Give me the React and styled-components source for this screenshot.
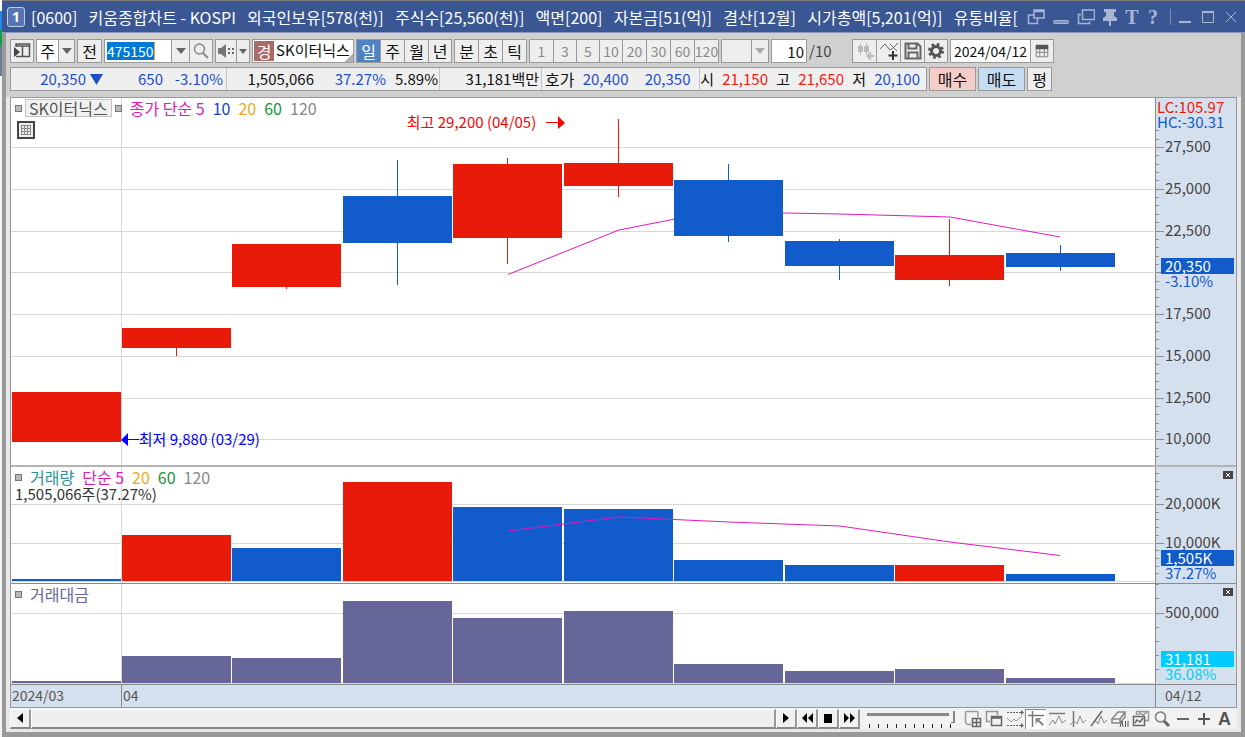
import React from 'react'
import styled, { createGlobalStyle } from 'styled-components'

const GlobalStyle = createGlobalStyle`
  * {
    box-sizing: border-box;
  }
  body {
    margin: 0;
    background: #ffffff;
    font: 16px/20px 'Noto Sans CJK KR', sans-serif;
    color: #111111;
  }
  button, input, select {
    font: inherit;
    color: inherit;
    margin: 0;
    padding: 0;
    border: 0;
    border-radius: 0;
    background: none;
    appearance: none;
    outline: none;
  }
`

const RED = '#e81b0a'
const BLUE = '#125bca'
const PURPLE = '#666699'
const PINK = '#e01ab8'

const Screen = styled.div`
  display: flex;
  min-height: 100vh;
`

const Behind = styled.div`
  width: 2px;
  background: linear-gradient(#ffffff 11px, #1e88e5 11px 29px, #12a04a 29px 46px, #6a7c96 46px 76px, #f4f4f4 76px);
`

const Win = styled.main`
  flex: 1;
  min-width: 0;
  display: flex;
  flex-direction: column;
  background: #999999;
  border-top: 1px solid #7c7c7c;
  padding-bottom: 5px;
`

const TitleBar = styled.header`
  height: 32px;
  display: flex;
  align-items: center;
  background: #3a5794;
  border-bottom: 1px solid #8a99bd;
  padding: 0 5px;
  color: #ffffff;
`

const WinNumber = styled.span`
  width: 18px;
  height: 20px;
  border: 1px solid #c3cde4;
  border-radius: 3px;
  background: #5674b4;
  font: bold 14px/18px 'Open Sans', sans-serif;
  text-align: center;
`

const Title = styled.h1`
  flex: 1;
  display: flex;
  justify-content: space-between;
  margin: 0 8px 0 6px;
  font-size: 16px;
  font-weight: 400;
  white-space: nowrap;
`

const TitleIcons = styled.div`
  display: flex;
  align-items: center;
  gap: 5px;
  color: #a9b6d3;
`

const TitleButton = styled.button`
  width: ${props => props.$width || 18}px;
  height: 20px;
  display: flex;
  align-items: center;
  justify-content: center;
  font: bold 20px/20px 'Liberation Serif', serif;
`

const TitleSplit = styled.span`
  width: 1px;
  height: 16px;
  margin-left: 4px;
  background: #7d8db0;
`

const Body = styled.div`
  flex: 1;
  margin: 0 4px;
  display: flex;
  flex-direction: column;
  background: #e8e8e8;
`

const Tools = styled.div`
  display: flex;
  flex-direction: column;
  gap: 4px;
  padding: 6px 4px;
  background: #d0d0d0;
`

const ToolRow = styled.div`
  display: flex;
  height: 24px;
  gap: 2px;
  white-space: nowrap;
`

const Group = styled.div`
  display: flex;
  background: #ffffff;
  border: 1px solid #999999;
  width: ${props => (props.$width ? `${props.$width}px` : 'auto')};

  > * + * {
    border-left: 1px solid #999999;
  }
`

const Tool = styled.button`
  width: ${props => props.$width || 24}px;
  height: 22px;
  display: flex;
  align-items: center;
  justify-content: center;
  background: ${props => (props.$on ? '#4f83c4' : '#eeeeee')};
  color: ${props => (props.$on ? '#ffffff' : props.$dim ? '#8a8a8a' : '#111111')};
  font-size: ${props => (props.$small ? 14 : 16)}px;
`

const Period = styled.select`
  width: 21px;
  text-align: center;
  text-align-last: center;
`

const CodeBox = styled.label`
  width: 66px;
  padding: 2px;
  display: flex;
`

const CodeInput = styled.input`
  width: 48px;
  height: 18px;
  background: #0078d7;
  color: #ffffff;
  border-right: 1px solid #f0a030;
  font-size: 14px;
`

const StockMark = styled.span`
  width: 20px;
  margin: 1px;
  text-align: center;
  background: #ab6a6a;
  color: #ffffff;
`

const StockName = styled.span`
  && {
    border: 0;
  }
  flex: 1;
  padding-left: 1px;
  font-size: 15px;
  background: linear-gradient(135deg, transparent 50%, #b0b0b0 50%) right bottom / 8px 8px no-repeat;
`

const CountInput = styled.input`
  width: 36px;
  height: 24px;
  border: 1px solid #999999;
  background: #ffffff;
  text-align: right;
  padding-right: 2px;
  font-size: 15px;
`

const CountTotal = styled.span`
  width: 41px;
  font-size: 15px;
  line-height: 24px;
  color: #444444;
`

const DateInput = styled.input`
  width: 79px;
  padding-left: 3px;
  font-size: 14px;
`

const InfoBox = styled.div`
  display: flex;
  background: #efefef;
  border: 1px solid #999999;
`

const InfoCell = styled.div`
  display: flex;
  width: ${props => props.$width}px;
  line-height: 22px;

  & + & {
    border-left: 1px solid #c4c4c4;
  }
`

const Value = styled.span`
  width: ${props => props.$width}px;
  text-align: right;
  font-size: 15px;
  color: ${props => props.$color || '#111111'};
`

const Label = styled.span`
  padding-left: 3px;
`

const Order = styled.button`
  width: ${props => props.$width}px;
  height: 24px;
  border: 1px solid #999999;
  background: ${props => props.$bg};
`

const ChartBox = styled.section`
  margin: 0 4px;
  border: 1px solid #999999;
  background: #ffffff;
`

const Pane = styled.div`
  display: flex;
  height: ${props => props.$height}px;
  border-bottom: ${props => props.$line}px solid ${props => (props.$line > 1 ? '#b4b4b4' : '#8c8c8c')};
`

const Plot = styled.div`
  position: relative;
  flex: 1;
  min-width: 0;

  > svg {
    display: block;
    width: 100%;
    height: 100%;
  }
`

const AxisSvg = styled.svg`
  display: block;
  width: 81px;
  height: 100%;
  flex: none;
  overflow: visible;
  background: #d5e0ee;
  border-left: 1px solid #8c8c8c;
  fill: #444444;
  font-size: 15px;
`

const Legend = styled.div`
  position: absolute;
  top: ${props => props.$top || 0}px;
  left: 4px;
  display: flex;
  align-items: center;
  gap: 8px;
  white-space: nowrap;
`

const NameBox = styled.div`
  display: flex;
  align-items: center;
  gap: 3px;
`

const Dot = styled.i`
  width: 7px;
  height: 7px;
  border: 1px solid #777777;
  background: #b8b8b8;
`

const Key = styled.span`
  color: ${props => props.$color};
`

const Volume = styled.span`
  color: #333333;
  font-size: 15px;
`

const NameTag = styled.span`
  height: 18px;
  line-height: 16px;
  padding: 0 3px;
  border: 1px solid #c4c4c4;
  background: #f1f1f1;
  color: #555555;
`

const TableButton = styled.button`
  position: absolute;
  left: 6px;
  top: 23px;
  width: 18px;
  height: 18px;
`

const Mark = styled.span`
  position: absolute;
  left: ${props => props.$left}%;
  top: ${props => props.$top}px;
  display: flex;
  align-items: center;
  gap: ${props => props.$gap}px;
  color: ${props => props.$color};
  font-size: 15px;
  white-space: nowrap;
`

const Dates = styled.div`
  display: flex;
  height: 22px;
  background: #d5e0ee;
  color: #555555;
  font-size: 14px;
  line-height: 20px;
`

const DateCell = styled.div`
  ${props => (props.$width ? `width: ${props.$width};` : 'flex: 1;')}
  padding-left: ${props => props.$pad || 1}px;

  & + & {
    border-left: 1px solid #8c8c8c;
  }
`

const Bottom = styled.footer`
  display: flex;
  align-items: center;
  height: 21px;
  margin: 0 4px;
  padding-right: 2px;
  background: #f2f2f2;
`

const ScrollButton = styled.button`
  width: 21px;
  height: 20px;
  display: flex;
  align-items: center;
  justify-content: center;
  background: #f0f0f0;
  border: solid;
  border-width: 1px 2px 2px 1px;
  border-color: #ffffff #999999 #888888 #ffffff;
`

const Thumb = styled.div`
  flex: 1;
  height: 20px;
  background: #efefef;
  border: solid;
  border-width: 1px 2px 2px 1px;
  border-color: #ffffff #999999 #888888 #ffffff;
`

const SpeedBox = styled.label`
  width: 88px;
  margin: 0 7px;
  display: flex;
  flex-direction: column;
`

const Speed = styled.input`
  width: 100%;
  height: 14px;
  background: linear-gradient(#888888, #888888) 0 3px / 82px 3px no-repeat;

  &::-webkit-slider-thumb {
    appearance: none;
    width: 4px;
    height: 12px;
    background: #f2f2f2;
    border-right: 2px solid #888888;
    border-bottom: 1px solid #777777;
  }
`

const ChartTools = styled.div`
  display: flex;
`

const ChartTool = styled.button`
  width: 21px;
  height: 20px;
  display: flex;
  align-items: center;
  justify-content: center;
  color: #555555;
  font: bold 18px/20px 'Liberation Sans', sans-serif;
  ${props => props.$on && 'background: #ffffff; border: solid #888888; border-width: 1px 0 0 1px;'}
`

const COLUMN = 110.45
const BAR = 109

const days = [
  { open: 9880, close: 12850, high: 12850, low: 9880, volume: 520, up: false, amount: 14 },
  { open: 15500, close: 16670, high: 16670, low: 15000, volume: 11950, up: true, amount: 195 },
  { open: 19150, close: 21700, high: 21700, low: 19000, volume: 8700, up: false, amount: 177 },
  { open: 24540, close: 21730, high: 26720, low: 19240, volume: 25600, up: true, amount: 585 },
  { open: 22030, close: 26480, high: 26840, low: 20500, volume: 19100, up: false, amount: 461 },
  { open: 25170, close: 26540, high: 29200, low: 24500, volume: 18700, up: false, amount: 514 },
  { open: 25500, close: 22180, high: 26480, low: 21800, volume: 5450, up: false, amount: 135 },
  { open: 21850, close: 20380, high: 22000, low: 19540, volume: 4150, up: false, amount: 85 },
  { open: 19540, close: 21040, high: 23200, low: 19180, volume: 4030, up: true, amount: 96 },
  { open: 21150, close: 20350, high: 21650, low: 20100, volume: 1800, up: false, amount: 35 }
]

const priceY = price => Math.round(49 + (27500 - price) * 0.016714)
const volumeY = volume => Math.round(114 - volume * 0.00385)
const amountY = amount => Math.round(99 - amount * 0.141)
const barX = index => Math.floor(1 + index * COLUMN)

const range = (from, to, step) => {
  const list = []
  for (let value = from; value <= to; value += step) list.push(value)
  return list
}

function Grid({ lines, height }) {
  return (
    <g stroke="#d8d8d8">
      {lines.map(y => (
        <line key={y} x1="0" x2="1143" y1={y + 0.5} y2={y + 0.5} />
      ))}
      <line x1="110.5" x2="110.5" y1="0" y2={height} />
    </g>
  )
}

function PlotSvg({ height, label, children }) {
  return (
    <svg viewBox={`0 0 1144 ${height}`} preserveAspectRatio="none" role="img" aria-label={label} shapeRendering="crispEdges">
      {children}
    </svg>
  )
}

function Axis({ majors, minors, children }) {
  return (
    <AxisSvg>
      <g stroke="#8c8c8c" shapeRendering="crispEdges">
        {minors.map(y => (
          <line key={y} x1="0" x2="3" y1={y + 0.5} y2={y + 0.5} />
        ))}
        {majors.map(({ y }) => (
          <line key={y} x1="0" x2="8" y1={y + 0.5} y2={y + 0.5} />
        ))}
      </g>
      {majors.map(({ y, text }) => (
        <text key={y} x="9" y={y + 5}>
          {text}
        </text>
      ))}
      {children}
    </AxisSvg>
  )
}

function Current({ y, color, value, rate }) {
  return (
    <g>
      <rect x="5" y={y} width="73" height="16" fill={color} />
      <text x="9" y={y + 14} fill="#ffffff">
        {value}
      </text>
      <text x="9" y={y + 29} fill={color}>
        {rate}
      </text>
    </g>
  )
}

function CloseMark() {
  return (
    <g>
      <rect x="67" y="4" width="10" height="8" fill="#444444" />
      <path d="M70 6l4 4M74 6l-4 4" stroke="#ffffff" />
    </g>
  )
}

function PricePane() {
  const majors = range(10000, 27500, 2500).map(price => ({
    y: priceY(price),
    text: price === 20000 ? '' : price.toLocaleString('en-US')
  }))
  return (
    <Pane $height={369} $line={2}>
      <Plot>
        <PlotSvg height={367} label="가격 차트">
          <Grid lines={majors.map(major => major.y)} height={367} />
          <polyline
            points="497,176.5 608,132 664,121 718,114 774,115 829,116 939,119 1049,139"
            fill="none"
            stroke={PINK}
            shapeRendering="auto"
          />
          {days.map((day, index) => {
            const top = priceY(Math.max(day.open, day.close))
            const bottom = priceY(Math.min(day.open, day.close))
            const color = day.close > day.open ? RED : BLUE
            const x = barX(index)
            return (
              <g key={index} fill={color}>
                <rect x={x + 54} y={priceY(day.high)} width="1" height={priceY(day.low) - priceY(day.high)} />
                <rect x={x} y={top} width={BAR} height={bottom - top} />
              </g>
            )
          })}
        </PlotSvg>
        <Legend>
          <NameBox>
            <Dot />
            <NameTag>SK이터닉스</NameTag>
            <Dot />
          </NameBox>
          <Key $color={PINK}>종가 단순 5</Key>
          <Key $color="#1440b8">10</Key>
          <Key $color="#f0a818">20</Key>
          <Key $color="#109838">60</Key>
          <Key $color="#888888">120</Key>
        </Legend>
        <TableButton aria-label="표">
          <svg width="18" height="18" fill="none" stroke="#444444" shapeRendering="crispEdges">
            <rect x="1" y="1" width="16" height="16" fill="#eeeeee" strokeWidth="2" />
            <path d="M4.500 4.500h9v9h-9zM4.500 7.500h9M4.500 10.500h9M7.500 4.500v9M10.500 4.500v9" stroke="#888888" />
          </svg>
        </TableButton>
        <Mark $left={34.6} $top={14} $gap={10} $color="#ff0000">
          최고 29,200 (04/05)
          <svg width="19" height="14" fill="currentColor">
            <path d="M0 7h12V1l7 7-7 6V8H0z" />
          </svg>
        </Mark>
        <Mark $left={9.6} $top={331} $gap={0} $color="#0000ff">
          <svg width="18" height="14" fill="currentColor">
            <path d="M18 7H7V1L0 8l7 6V8h11z" />
          </svg>
          최저 9,880 (03/29)
        </Mark>
      </Plot>
      <Axis majors={majors} minors={range(9000, 28500, 500).map(priceY)}>
        <text x="1" y="15" fill={RED}>
          LC:105.97
        </text>
        <text x="1" y="30" fill={BLUE}>
          HC:-30.31
        </text>
        <Current y={160} color={BLUE} value="20,350" rate="-3.10%" />
      </Axis>
    </Pane>
  )
}

function VolumePane() {
  const majors = [20000, 10000].map(volume => ({ y: volumeY(volume), text: `${volume.toLocaleString('en-US')}K` }))
  return (
    <Pane $height={117} $line={1}>
      <Plot>
        <PlotSvg height={116} label="거래량 차트">
          <Grid lines={[...majors.map(major => major.y), 114]} height={116} />
          {days.map((day, index) => (
            <rect
              key={index}
              x={barX(index)}
              y={volumeY(day.volume)}
              width={BAR}
              height={114 - volumeY(day.volume)}
              fill={day.up ? RED : BLUE}
            />
          ))}
          <polyline
            points="497,64 608,50 718,55 829,59 939,75 1049,88.5"
            fill="none"
            stroke={PINK}
            shapeRendering="auto"
          />
        </PlotSvg>
        <Legend>
          <Dot />
          <Key $color="#2a9490">거래량</Key>
          <Key $color={PINK}>단순 5</Key>
          <Key $color="#f0a818">20</Key>
          <Key $color="#109838">60</Key>
          <Key $color="#888888">120</Key>
        </Legend>
        <Legend $top={17}>
          <Volume>1,505,066주(37.27%)</Volume>
        </Legend>
      </Plot>
      <Axis majors={majors} minors={range(2000, 28000, 2000).map(volumeY)}>
        <Current y={83} color={BLUE} value="1,505K" rate="37.27%" />
        <CloseMark />
      </Axis>
    </Pane>
  )
}

function AmountPane() {
  const majors = [{ y: amountY(500), text: '500,000' }]
  return (
    <Pane $height={101} $line={1}>
      <Plot>
        <PlotSvg height={100} label="거래대금 차트">
          <Grid lines={[amountY(500), 99]} height={100} />
          {days.map((day, index) => (
            <rect
              key={index}
              x={barX(index)}
              y={amountY(day.amount)}
              width={BAR}
              height={99 - amountY(day.amount)}
              fill={PURPLE}
            />
          ))}
        </PlotSvg>
        <Legend>
          <Dot />
          <Key $color={PURPLE}>거래대금</Key>
        </Legend>
      </Plot>
      <Axis majors={majors} minors={range(100, 700, 100).map(amountY)}>
        <Current y={67} color="#00ccff" value="31,181" rate="36.08%" />
        <CloseMark />
      </Axis>
    </Pane>
  )
}

function Arrow({ color = '#666666' }) {
  return (
    <svg width="10" height="6">
      <path d="M0 0h10L5 6z" fill={color} />
    </svg>
  )
}

function Icon({ size = 18, width = 1, children }) {
  return (
    <svg width={size} height={size} viewBox="0 0 18 18" fill="none" stroke="currentColor" strokeWidth={width}>
      {children}
    </svg>
  )
}

function Header() {
  return (
    <TitleBar>
      <WinNumber>1</WinNumber>
      <Title>
        <span>[0600]</span>
        <span>키움종합차트 - KOSPI</span>
        <span>외국인보유[578(천)]</span>
        <span>주식수[25,560(천)]</span>
        <span>액면[200]</span>
        <span>자본금[51(억)]</span>
        <span>결산[12월]</span>
        <span>시가총액[5,201(억)]</span>
        <span>유통비율[</span>
      </Title>
      <TitleIcons>
        <TitleButton $width={20} aria-label="연결">
          <Icon>
            <path d="M7 2h10v8H7zM7 7H1.500v8.500h9V10M7 3.500h10" strokeWidth="1.500" />
          </Icon>
        </TitleButton>
        <TitleButton $width={20} aria-label="내리기">
          <Icon>
            <rect x="1.500" y="12.500" width="15" height="3" rx="1" fill="#7f92bf" />
          </Icon>
        </TitleButton>
        <TitleButton $width={20} aria-label="복사">
          <Icon>
            <path d="M5.500 2h12v9.500h-12zM4 6.500H1.500v9h11v-2" strokeWidth="1.500" />
          </Icon>
        </TitleButton>
        <TitleButton aria-label="고정">
          <Icon>
            <path d="M3 1h12v3h-2v4l3 2v3h-6v5H8v-5H2v-3l3-2V4H3z" fill="currentColor" stroke="none" />
          </Icon>
        </TitleButton>
        <TitleButton $width={16}>T</TitleButton>
        <TitleButton $width={16}>?</TitleButton>
        <TitleSplit />
        <TitleButton aria-label="최소화">
          <Icon>
            <path d="M3 14h12" strokeWidth="2" />
          </Icon>
        </TitleButton>
        <TitleButton aria-label="최대화">
          <Icon>
            <path d="M3.500 3.500h11v11h-11zM3 4.500h12" />
          </Icon>
        </TitleButton>
        <TitleButton aria-label="닫기">
          <Icon>
            <path d="M4 4l10 10M14 4L4 14" />
          </Icon>
        </TitleButton>
      </TitleIcons>
    </TitleBar>
  )
}

function Toolbar() {
  return (
    <ToolRow>
      <Group>
        <Tool $width={22} aria-label="목록">
          <Icon>
            <path d="M3 5V2h13.500v12.500H3M3 4h13.500M9.500 4v10" stroke="#555555" strokeWidth="1.500" />
            <path d="M1 5l6 5-6 5z" fill="#444444" stroke="none" />
          </Icon>
        </Tool>
      </Group>
      <Group>
        <Period aria-label="종류">
          <option>주</option>
        </Period>
        <Tool $width={16} aria-label="종류 열기">
          <Arrow />
        </Tool>
      </Group>
      <Group>
        <Tool $width={23}>전</Tool>
      </Group>
      <Group>
        <CodeBox>
          <CodeInput aria-label="종목코드" defaultValue="475150" />
        </CodeBox>
        <Tool $width={18} aria-label="최근 종목">
          <Arrow />
        </Tool>
        <Tool $width={23} aria-label="종목 검색">
          <Icon>
            <circle cx="7.500" cy="7" r="5" stroke="#888888" strokeWidth="1.500" />
            <path d="M11 11l5 5" stroke="#888888" strokeWidth="2" />
          </Icon>
        </Tool>
      </Group>
      <Group>
        <Tool $width={20} aria-label="소리">
          <Icon>
            <path d="M1 6h3l5-4v14l-5-4H1z" fill="#777777" stroke="none" />
            <path d="M11 7h2M11 11h2M15 7h2M15 11h2" stroke="#666666" strokeWidth="2" />
          </Icon>
        </Tool>
        <Tool $width={13} aria-label="소리 설정">
          <svg width="8" height="5">
            <path d="M0 0h8L4 5z" fill="#666666" />
          </svg>
        </Tool>
      </Group>
      <Group $width={102}>
        <StockMark>경</StockMark>
        <StockName>SK이터닉스</StockName>
      </Group>
      <Group>
        <Tool $width={23} $on>
          일
        </Tool>
        <Tool>주</Tool>
        <Tool>월</Tool>
        <Tool $width={23}>년</Tool>
      </Group>
      <Group>
        <Tool $width={23}>분</Tool>
        <Tool>초</Tool>
        <Tool $width={24}>틱</Tool>
      </Group>
      <Group>
        {[1, 3, 5, 10, 20, 30, 60, 120].map(unit => (
          <Tool key={unit} $width={unit < 20 ? 23 : 24} $dim $small>
            {unit}
          </Tool>
        ))}
      </Group>
      <Group>
        <Tool $width={29} aria-label="단위" />
        <Tool $width={17} aria-label="단위 열기">
          <Arrow color="#a8a8a8" />
        </Tool>
      </Group>
      <CountInput aria-label="개수" defaultValue="10" />
      <CountTotal>/10</CountTotal>
      <Group>
        <Tool $width={23} $dim aria-label="이전">
          <Icon>
            <path d="M4.500 1v12M10.500 1v12" stroke="#bbbbbb" />
            <path d="M2 4h5v6H2zM8 4h5v6H8z" fill="#bbbbbb" stroke="none" />
            <path d="M18 14h-6M15 10.500L11.500 14l3.500 3.500" stroke="#bbbbbb" strokeWidth="2" />
          </Icon>
        </Tool>
        <Tool aria-label="지표 추가">
          <Icon>
            <path d="M0 7l5-5 5 6 3-2 5-5M10 2l3 3 4 4" stroke="#666666" />
            <path d="M13 9v9M8.500 13.500h9" stroke="#333333" strokeWidth="2" />
          </Icon>
        </Tool>
        <Tool aria-label="저장">
          <Icon>
            <path d="M1.500 1.500h12l3 3v12h-15zM4.500 1.500v5h8v-5M4.500 16.500v-6h9v6" stroke="#666666" strokeWidth="2" />
          </Icon>
        </Tool>
        <Tool $width={23} aria-label="설정">
          <Icon>
            <circle cx="9" cy="9" r="4.500" stroke="#555555" strokeWidth="3" />
            <circle cx="9" cy="9" r="6.500" stroke="#555555" strokeWidth="3" strokeDasharray="2.600 2.500" />
          </Icon>
        </Tool>
      </Group>
      <Group>
        <DateInput aria-label="날짜" defaultValue="2024/04/12" />
        <Tool $width={23} aria-label="달력">
          <Icon size={16}>
            <path d="M2.500 3.500h13v12h-13zM6.500 6v9M11.500 6v9M3 10.500h12" stroke="#777777" />
            <path d="M2 2h14v5H2z" fill="#555555" stroke="none" />
          </Icon>
        </Tool>
      </Group>
    </ToolRow>
  )
}

function Quote() {
  return (
    <ToolRow>
      <InfoBox>
        <InfoCell $width={215}>
          <Value $width={75} $color="#1c50c8">20,350</Value>
          <Value $width={17} $color="#1c50c8">
            <svg width="13" height="11">
              <path d="M0 0h13L6.500 11z" fill="currentColor" />
            </svg>
          </Value>
          <Value $width={60} $color="#1c50c8">650</Value>
          <Value $width={60} $color="#1c50c8">-3.10%</Value>
        </InfoCell>
        <InfoCell $width={213}>
          <Value $width={87}>1,505,066</Value>
          <Value $width={72} $color="#1c50c8">37.27%</Value>
          <Value $width={52}>5.89%</Value>
        </InfoCell>
        <InfoCell $width={102}>
          <Value $width={99}>31,181백만</Value>
        </InfoCell>
        <InfoCell $width={158}>
          <Label>호가</Label>
          <Value $width={54} $color="#1c50c8">20,400</Value>
          <Value $width={62} $color="#1c50c8">20,350</Value>
        </InfoCell>
        <InfoCell $width={227}>
          <Value $width={14}>시</Value>
          <Value $width={54} $color="#ee2010">21,150</Value>
          <Value $width={22}>고</Value>
          <Value $width={54} $color="#ee2010">21,650</Value>
          <Value $width={22}>저</Value>
          <Value $width={54} $color="#1c50c8">20,100</Value>
        </InfoCell>
      </InfoBox>
      <Order $width={47} $bg="#f4ccc8">매수</Order>
      <Order $width={47} $bg="#c5dcf2">매도</Order>
      <Order $width={25} $bg="#eeeeee">평</Order>
    </ToolRow>
  )
}

function Footer() {
  return (
    <Bottom>
      <ScrollButton aria-label="왼쪽">
        <svg width="6" height="10">
          <path d="M6 0v10L0 5z" />
        </svg>
      </ScrollButton>
      <Thumb />
      <ScrollButton aria-label="오른쪽">
        <svg width="6" height="10">
          <path d="M0 0v10l6-5z" />
        </svg>
      </ScrollButton>
      <ScrollButton aria-label="뒤로">
        <svg width="11" height="10">
          <path d="M5 0v10L0 5zM11 0v10L6 5z" />
        </svg>
      </ScrollButton>
      <ScrollButton aria-label="정지">
        <svg width="8" height="9">
          <path d="M0 0h8v9H0z" />
        </svg>
      </ScrollButton>
      <ScrollButton aria-label="앞으로">
        <svg width="11" height="10">
          <path d="M0 0v10l5-5zM6 0v10l5-5z" />
        </svg>
      </ScrollButton>
      <SpeedBox>
        <Speed type="range" min="0" max="9" defaultValue="9" aria-label="속도" />
        <svg width="88" height="4">
          <path d="M2 2h84" stroke="#222222" strokeWidth="4" strokeDasharray="1 8" />
        </svg>
      </SpeedBox>
      <ChartTools>
        <ChartTool aria-label="추가">
          <Icon>
            <path d="M14 7V2.500a1 1 0 0 0-1-1H2.500a1 1 0 0 0-1 1v10l2 2H7" stroke="#999999" strokeWidth="1.500" />
            <path d="M8.500 8.500h8v8h-8zM12.500 8.500v8M8.500 12.500h8" stroke="#666666" strokeWidth="1.500" />
          </Icon>
        </ChartTool>
        <ChartTool aria-label="겹치기">
          <Icon>
            <path d="M5 11.500H1.500v-10h11V5" stroke="#999999" strokeWidth="1.500" />
            <path d="M6.500 6.500h10v9h-10zM6.500 8h10" stroke="#666666" strokeWidth="1.500" />
          </Icon>
        </ChartTool>
        <ChartTool aria-label="구간">
          <Icon>
            <path d="M1 2.500h14M1 15.500h14" stroke="#666666" strokeDasharray="2 1" />
            <path d="M15 0v5l3-2.500zM15 13v5l3-2.500z" fill="#666666" stroke="none" />
            <path d="M1 8l4 4 3-3 2 2 6-5" stroke="#999999" />
          </Icon>
        </ChartTool>
        <ChartTool $on aria-label="십자선">
          <Icon>
            <path d="M1 5.500h16M5.500 1v16" stroke="#777777" strokeWidth="1.500" />
            <path d="M8.500 8h6l-2 2 4.500 4.500-1.500 1.500L11 11.500 8.500 14z" fill="#888888" stroke="none" />
          </Icon>
        </ChartTool>
        <ChartTool aria-label="수평선">
          <Icon>
            <path d="M1 3.500h16" stroke="#777777" strokeWidth="1.500" />
            <path d="M1 15l4-5 2 4 4-8 3 7 4-3" stroke="#888888" />
          </Icon>
        </ChartTool>
        <ChartTool aria-label="수직선">
          <Icon>
            <path d="M4.500 1v16" stroke="#777777" strokeWidth="1.500" />
            <path d="M1 15l4-4 3 3 3-8 3 7 3-3" stroke="#888888" />
          </Icon>
        </ChartTool>
        <ChartTool aria-label="추세선">
          <Icon>
            <path d="M1 16L12 1" stroke="#666666" strokeWidth="1.500" />
            <path d="M2 14l4-3 2 3 3-8 3 7 3-3" stroke="#888888" />
          </Icon>
        </ChartTool>
        <ChartTool aria-label="전체 지우기">
          <Icon>
            <path d="M1 9l6-7h7l-5 7zM1 9v4h8V9M9 13l5-6V2" stroke="#888888" strokeWidth="1.500" />
            <path d="M9 17l2-6 1 6M14.500 11v6M17 11v6" stroke="#555555" />
          </Icon>
        </ChartTool>
        <ChartTool aria-label="차트 비교">
          <Icon>
            <path d="M4.500 5V1.500h12v9H13M6 5l2-2 3 2 4-3" stroke="#999999" strokeWidth="1.500" />
            <path d="M1.500 6.500h11v9h-11zM3 13l2-3 3 2 3-4" stroke="#666666" strokeWidth="1.500" />
          </Icon>
        </ChartTool>
        <ChartTool aria-label="돋보기">
          <Icon>
            <circle cx="7.500" cy="7" r="5" stroke="#777777" strokeWidth="1.500" />
            <path d="M11 11l5 5" stroke="#666666" strokeWidth="3" />
          </Icon>
        </ChartTool>
        <ChartTool aria-label="축소">
          <Icon>
            <path d="M3 9h12" stroke="#666666" strokeWidth="2" />
          </Icon>
        </ChartTool>
        <ChartTool aria-label="확대">
          <Icon>
            <path d="M3 9h12M9 3v12" stroke="#555555" strokeWidth="2" />
          </Icon>
        </ChartTool>
        <ChartTool>A</ChartTool>
      </ChartTools>
    </Bottom>
  )
}

export default function App() {
  return (
    <Screen>
      <GlobalStyle />
      <Behind />
      <Win>
        <Header />
        <Body>
          <Tools>
            <Toolbar />
            <Quote />
          </Tools>
          <ChartBox>
            <PricePane />
            <VolumePane />
            <AmountPane />
            <Dates>
              <DateCell $width="110px">2024/03</DateCell>
              <DateCell>04</DateCell>
              <DateCell $width="81px" $pad={9}>04/12</DateCell>
            </Dates>
          </ChartBox>
          <Footer />
        </Body>
      </Win>
    </Screen>
  )
}
